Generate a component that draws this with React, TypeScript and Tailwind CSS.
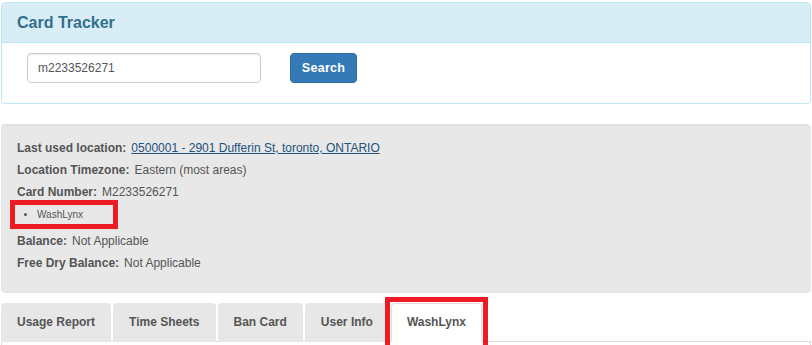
import React from "react";

const tabs = ["Usage Report", "Time Sheets", "Ban Card", "User Info", "WashLynx"];

export default function App() {
  return (
    <div
      className="w-[812px] h-[345px] overflow-hidden bg-white px-[1px] pt-[2px] text-[12px] text-[#555]"
      style={{ fontFamily: '"Liberation Sans", Arial, sans-serif' }}
    >
      {/* Panel */}
      <div className="rounded-[4px] border border-[#bce8f1] bg-white">
        <div className="flex h-[40px] items-center rounded-t-[3px] border-b border-[#bce8f1] bg-[#d9edf7] px-[15px]">
          <h3 className="text-[16px] font-bold text-[#31708f]">Card Tracker</h3>
        </div>
        <div className="flex items-center pl-[25px] pt-[10px] pb-[20px]">
          <div className="flex h-[30px] w-[234px] items-center rounded-[4px] border border-[#ccc] px-[10px] text-[12px] text-[#555] shadow-[inset_0_1px_1px_rgba(0,0,0,0.075)]">
            m2233526271
          </div>
          <button className="ml-[29px] flex h-[30px] w-[67px] items-center justify-center rounded-[4px] border border-[#2e6da4] bg-[#337ab7] text-[12.5px] font-bold tracking-[0.3px] text-white">
            Search
          </button>
        </div>
      </div>

      {/* Well */}
      <div className="mt-[20px] rounded-[4px] border border-[#e3e3e3] bg-[#e8e8e8] pl-[15px] pt-[12px] pb-[18px] shadow-[inset_0_1px_1px_rgba(0,0,0,0.05)]">
        <div className="flex gap-[5px] leading-[22px]">
          <span className="font-bold">Last used location:</span>
          <span className="text-[#23527c] underline">0500001 - 2901 Dufferin St, toronto, ONTARIO</span>
        </div>
        <div className="flex gap-[5px] leading-[22px]">
          <span className="font-bold">Location Timezone:</span>
          <span>Eastern (most areas)</span>
        </div>
        <div className="flex gap-[5px] leading-[22px]">
          <span className="font-bold">Card Number:</span>
          <span>M2233526271</span>
        </div>
        <div className="relative mt-[5px] mb-[8px]">
          <ul className="list-disc pl-[20px] text-[10px] leading-[14px]">
            <li>WashLynx</li>
          </ul>
          <div className="absolute -left-[7px] -top-[8px] h-[29px] w-[108px] border-[5px] border-[#ed1c24]" />
        </div>
        <div className="flex gap-[5px] leading-[22px]">
          <span className="font-bold">Balance:</span>
          <span>Not Applicable</span>
        </div>
        <div className="flex gap-[5px] leading-[22px]">
          <span className="font-bold">Free Dry Balance:</span>
          <span>Not Applicable</span>
        </div>
      </div>

      {/* Tabs */}
      <div className="mt-[10px]">
        <ul className="flex">
          {tabs.map((t) => {
            const active = t === "WashLynx";
            return (
              <li key={t} className="relative -mb-px mr-[2px]">
                <div
                  className={
                    active
                      ? "rounded-t-[4px] border border-[#ddd] border-b-white bg-white px-[15px] py-[10px] text-[12px] font-bold leading-[17px] text-[#555]"
                      : "rounded-t-[4px] border border-transparent bg-[#e7e7e7] px-[15px] py-[10px] text-[12px] font-bold leading-[17px] text-[#555]"
                  }
                >
                  {t}
                </div>
                {active && (
                  <div className="absolute -left-[6px] -right-[6px] -top-[6px] h-[60px] border-[5px] border-[#ed1c24]" />
                )}
              </li>
            );
          })}
        </ul>
        <div className="h-[40px] border border-[#ddd]" />
      </div>
    </div>
  );
}
